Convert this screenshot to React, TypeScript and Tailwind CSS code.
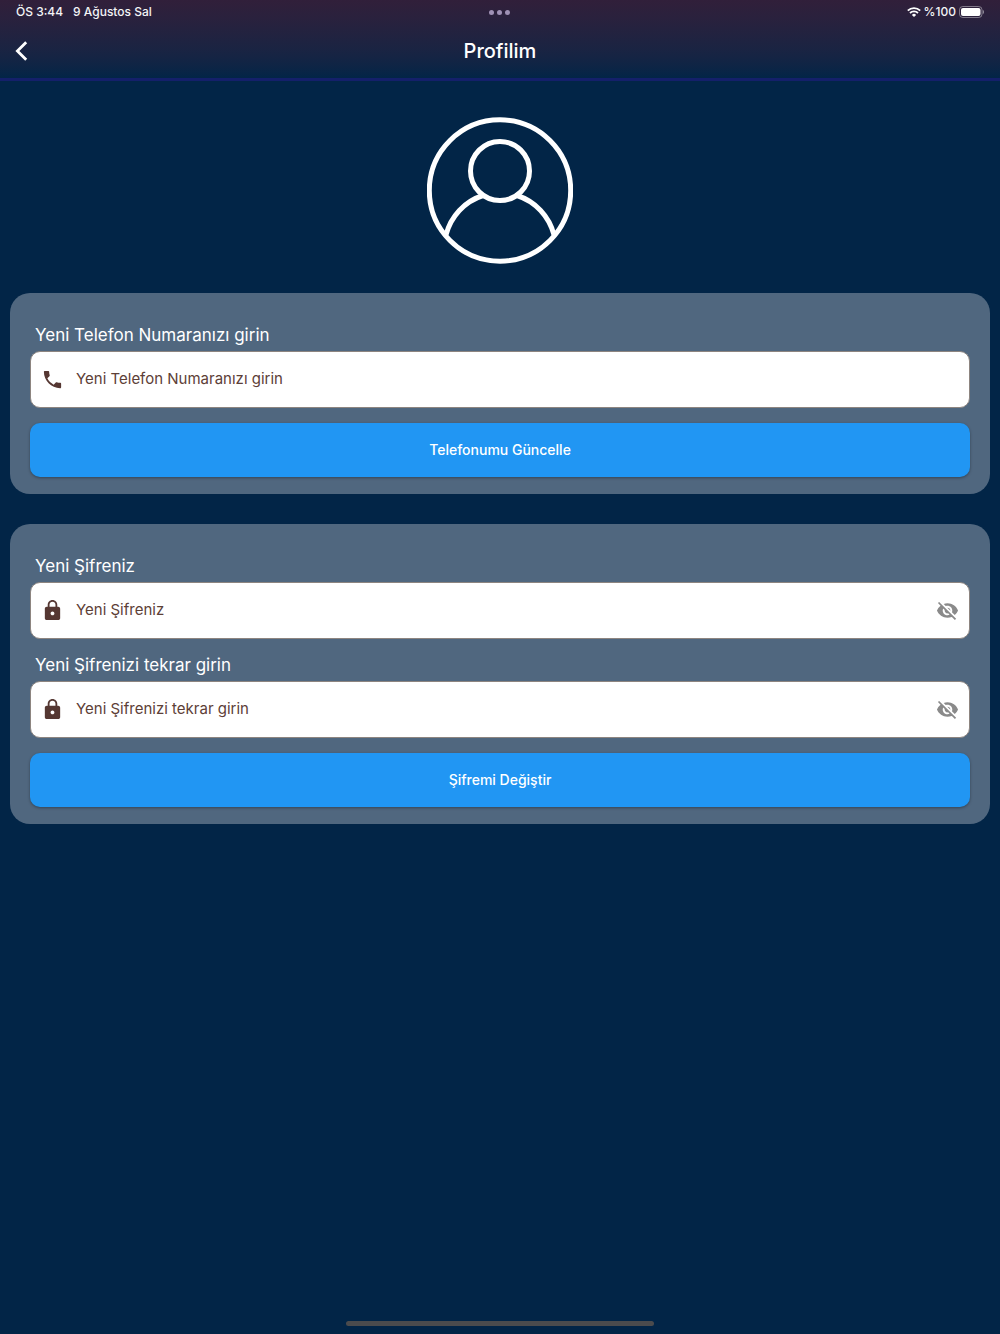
import React, { useState } from 'react';
import { MdLock, MdPhone, MdVisibilityOff, MdVisibility } from 'react-icons/md';

const StatusBar = () => {
  return (
    <div className="grid h-6 grid-cols-3 items-center px-4 text-xs font-medium text-gray-100">
      <div className="flex items-center gap-[10px]">
        <span>ÖS 3:44</span>
        <span>9 Ağustos Sal</span>
      </div>
      <div className="flex items-center justify-center gap-[3px]">
        <span className="size-[5px] rounded-full bg-[#9f91b5]" />
        <span className="size-[5px] rounded-full bg-[#9f91b5]" />
        <span className="size-[5px] rounded-full bg-[#9f91b5]" />
      </div>
      <div className="flex items-center justify-end gap-[3px]">
        <svg width="14" height="10" viewBox="0 0 14 10" fill="none" stroke="white" strokeWidth="1.8">
          <path d="M0.8 3.6a8.8 8.8 0 0 1 12.4 0" />
          <path d="M3 6a5.7 5.7 0 0 1 8 0" />
          <path d="M7 10 4.9 7.9a3 3 0 0 1 4.2 0Z" fill="white" stroke="none" />
        </svg>
        <span>%100</span>
        <svg width="25" height="12" viewBox="0 0 25 12" fill="none">
          <rect x="0.5" y="0.5" width="22.5" height="11" rx="3.3" stroke="white" strokeOpacity="0.4" />
          <rect x="2" y="2" width="19.5" height="8" rx="2" fill="white" />
          <path d="M23.9 4v4c1.4-.6 1.4-3.4 0-4Z" fill="white" fillOpacity="0.5" />
        </svg>
      </div>
    </div>
  );
};

const Header = () => {
  return (
    <header className="border-b-[3px] border-[#14206a] bg-linear-to-b from-[#311f3a] to-[#022547]">
      <StatusBar />
      <div className="grid h-[54px] grid-cols-[40px_1fr_40px] items-center px-3">
        <button type="button" aria-label="Geri" className="flex h-10 items-center">
          <svg width="20" height="20" viewBox="0 0 20 20" fill="none" stroke="white" strokeWidth="2.8">
            <path d="M14.2 1.2 5.4 10l8.8 8.8" />
          </svg>
        </button>
        <h1 className="text-center text-xl font-medium text-white">Profilim</h1>
      </div>
    </header>
  );
};

const Avatar = () => {
  return (
    <svg className="mx-auto" width="146" height="148" viewBox="0 0 146 148" fill="none" stroke="white" strokeWidth="5">
      <circle cx="73" cy="73.5" r="70.7" />
      <circle cx="73" cy="54" r="29.5" />
      <path d="M19 118a55.5 55.5 0 0 1 37-39.5" />
      <path d="M127 118a55.5 55.5 0 0 0-37-39.5" />
    </svg>
  );
};

type FieldProps = {
  id: string;
  label: string;
  icon: React.ReactNode;
  password?: boolean;
};

const Field = ({ id, label, icon, password = false }: FieldProps) => {
  const [visible, setVisible] = useState(false);

  return (
    <div>
      <label htmlFor={id} className="block px-[5px] pb-1 text-[17px] leading-6 text-white">
        {label}
      </label>
      <div className="flex h-[57px] items-center gap-3 rounded-[10px] border border-[#8d8580] bg-white px-[10px] text-[#553732]">
        {icon}
        <input
          id={id}
          type={password && !visible ? 'password' : 'text'}
          placeholder={label}
          className="min-w-0 flex-1 bg-transparent text-[15px] outline-none placeholder:text-[#5d4037]"
        />
        {password && (
          <button
            type="button"
            aria-label={visible ? 'Şifreyi gizle' : 'Şifreyi göster'}
            onClick={() => setVisible(!visible)}
            className="text-[#8a8a8a]"
          >
            {visible ? <MdVisibility size={23} /> : <MdVisibilityOff size={23} />}
          </button>
        )}
      </div>
    </div>
  );
};

const SubmitButton = ({ children }: { children: React.ReactNode }) => {
  return (
    <button
      type="submit"
      className="h-[54px] w-full rounded-[10px] bg-[#2196f3] text-sm font-medium text-white shadow-[0_1px_3px_rgba(0,0,0,0.35)]"
    >
      {children}
    </button>
  );
};

const Card = ({ children }: { children: React.ReactNode }) => {
  return (
    <form
      onSubmit={(e) => e.preventDefault()}
      className="flex flex-col gap-[15px] rounded-[20px] bg-[#50677f] px-5 pt-[30px] pb-[17px]"
    >
      {children}
    </form>
  );
};

const App = () => {
  return (
    <div className="flex min-h-screen flex-col bg-[#022547] font-['Inter','Noto_Sans',sans-serif]">
      <Header />
      <main className="flex flex-1 flex-col px-[10px] pt-9">
        <Avatar />
        <div className="mt-7 flex flex-col gap-[30px]">
          <Card>
            <Field id="phone" label="Yeni Telefon Numaranızı girin" icon={<MdPhone size={23} />} />
            <SubmitButton>Telefonumu Güncelle</SubmitButton>
          </Card>
          <Card>
            <div className="flex flex-col gap-[14px]">
              <Field id="password" label="Yeni Şifreniz" icon={<MdLock size={23} />} password />
              <Field
                id="password-repeat"
                label="Yeni Şifrenizi tekrar girin"
                icon={<MdLock size={23} />}
                password
              />
            </div>
            <SubmitButton>Şifremi Değiştir</SubmitButton>
          </Card>
        </div>
      </main>
      <div className="mx-auto mb-2 h-[5px] w-[308px] rounded-full bg-[#4b4b4d]" />
    </div>
  );
};

export default App;
